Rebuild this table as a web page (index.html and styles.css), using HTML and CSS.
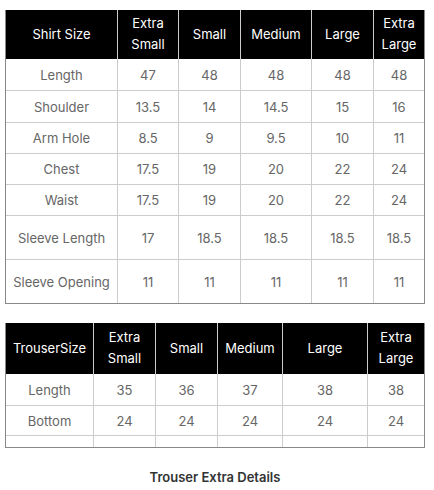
FILE: index.html
```html
<!DOCTYPE html>
<html>
<head>
<meta charset="utf-8">
<link rel="stylesheet" href="styles.css">
</head>
<body>
<div class="wrap">
  <table class="size-table shirt">
    <thead>
      <tr class="head">
        <th class="c1">Shirt Size</th>
        <th class="c2">Extra<br>Small</th>
        <th class="c3">Small</th>
        <th class="c4">Medium</th>
        <th class="c5">Large</th>
        <th class="c6 last">Extra<br>Large</th>
      </tr>
    </thead>
    <tbody>
      <tr class="r32"><td>Length</td><td>47</td><td>48</td><td>48</td><td>48</td><td class="last">48</td></tr>
      <tr class="r32"><td>Shoulder</td><td>13.5</td><td>14</td><td>14.5</td><td>15</td><td class="last">16</td></tr>
      <tr class="r31"><td>Arm Hole</td><td>8.5</td><td>9</td><td>9.5</td><td>10</td><td class="last">11</td></tr>
      <tr class="r31"><td>Chest</td><td>17.5</td><td>19</td><td>20</td><td>22</td><td class="last">24</td></tr>
      <tr class="r31"><td>Waist</td><td>17.5</td><td>19</td><td>20</td><td>22</td><td class="last">24</td></tr>
      <tr class="r44"><td>Sleeve Length</td><td>17</td><td>18.5</td><td>18.5</td><td>18.5</td><td class="last">18.5</td></tr>
      <tr class="r44 end"><td>Sleeve Opening</td><td>11</td><td>11</td><td>11</td><td>11</td><td class="last">11</td></tr>
    </tbody>
  </table>

  <table class="size-table trouser">
    <thead>
      <tr class="head">
        <th class="t1">TrouserSize</th>
        <th class="t2">Extra<br>Small</th>
        <th class="t3">Small</th>
        <th class="t4">Medium</th>
        <th class="t5">Large</th>
        <th class="t6 last">Extra<br>Large</th>
      </tr>
    </thead>
    <tbody>
      <tr class="r32"><td>Length</td><td>35</td><td>36</td><td>37</td><td>38</td><td class="last">38</td></tr>
      <tr class="r30"><td>Bottom</td><td>24</td><td>24</td><td>24</td><td>24</td><td class="last">24</td></tr>
      <tr class="r12 end"><td></td><td></td><td></td><td></td><td></td><td class="last"></td></tr>
    </tbody>
  </table>

  <h3 class="title">Trouser Extra Details</h3>
</div>
</body>
</html>
```

FILE: styles.css
```css
html, body {
  margin: 0;
  padding: 0;
  background: #fff;
}
body {
  font-family: Inter, "Noto Sans", sans-serif;
  font-size: 13px;
  color: #666;
}
.wrap {
  width: 420px;
  padding: 10px 0 0 5px;
}
.size-table {
  width: 420px;
  border-collapse: separate;
  border-spacing: 0;
  table-layout: fixed;
  border-left: 1px solid #888;
  border-right: 1px solid #888;
  border-bottom: 1px solid #888;
}
.size-table th,
.size-table td {
  box-sizing: border-box;
  padding: 0;
  text-align: center;
  vertical-align: middle;
  border-right: 1px solid #ccc;
  line-height: 20px;
}
.size-table td {
  border-bottom: 1px solid #ccc;
}
.size-table .last {
  border-right: none;
}
.size-table .end td {
  border-bottom: none;
}
.head th {
  background: #000;
  color: #fff;
  font-weight: 400;
  height: 49px;
  line-height: 21px;
  padding-bottom: 1px;
}
.trouser .head th {
  height: 51px;
}
.trouser {
  margin-top: 19px;
}
.r32 td { height: 32px; }
.r31 td { height: 31px; }
.r30 td { height: 30px; }
.r44 td { height: 44px; }
.r12 td { height: 12px; }
.end td { height: 43px; }
.r12.end td { height: 11px; }

.c1 { width: 112px; }
.c2 { width: 61px; }
.c3 { width: 62px; }
.c4 { width: 71px; }
.c5 { width: 62px; }
.c6 { width: 50px; }

.t1 { width: 88px; }
.t2 { width: 62px; }
.t3 { width: 62px; }
.t4 { width: 65px; }
.t5 { width: 85px; }
.t6 { width: 56px; }

.title {
  margin: 20px 0 0 0;
  text-align: center;
  font-size: 13px;
  font-weight: 600;
  color: #333;
  line-height: 18px;
}
```
